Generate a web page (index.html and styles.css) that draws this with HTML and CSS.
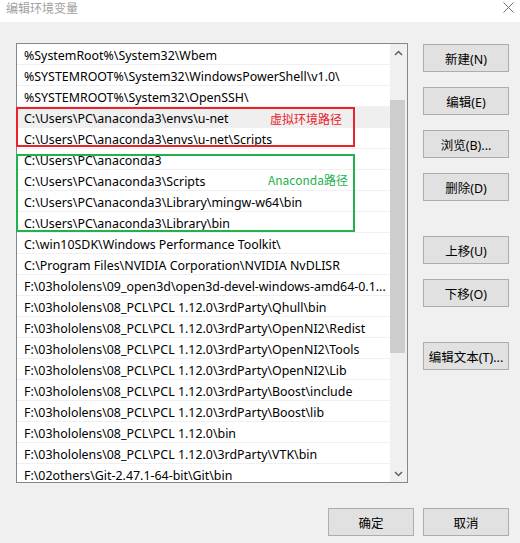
FILE: index.html
```html
<!DOCTYPE html>
<html>
	<head>
		<meta charset="UTF-8">
		<title>编辑环境变量</title>
		<link rel="stylesheet" href="styles.css">
	</head>
	<body>
		<div class="titlebar">
			<span class="title">编辑环境变量</span>
			<svg class="close" width="11" height="11" viewBox="0 0 11 11">
				<path d="M0.5 0.5L10.5 10.5M10.5 0.5L0.5 10.5" stroke="#707070" stroke-width="1" fill="none"/>
			</svg>
		</div>
		<div class="content">
			<div class="main">
				<div class="listwrap">
					<div class="list">
						<ul class="rows">
							<li>%SystemRoot%\System32\Wbem</li>
							<li>%SYSTEMROOT%\System32\WindowsPowerShell\v1.0\</li>
							<li>%SYSTEMROOT%\System32\OpenSSH\</li>
							<li class="hover">C:\Users\PC\anaconda3\envs\u-net</li>
							<li>C:\Users\PC\anaconda3\envs\u-net\Scripts</li>
							<li>C:\Users\PC\anaconda3</li>
							<li>C:\Users\PC\anaconda3\Scripts</li>
							<li>C:\Users\PC\anaconda3\Library\mingw-w64\bin</li>
							<li>C:\Users\PC\anaconda3\Library\bin</li>
							<li>C:\win10SDK\Windows Performance Toolkit\</li>
							<li>C:\Program Files\NVIDIA Corporation\NVIDIA NvDLISR</li>
							<li>F:\03hololens\09_open3d\open3d-devel-windows-amd64-0.1...</li>
							<li>F:\03hololens\08_PCL\PCL 1.12.0\3rdParty\Qhull\bin</li>
							<li>F:\03hololens\08_PCL\PCL 1.12.0\3rdParty\OpenNI2\Redist</li>
							<li>F:\03hololens\08_PCL\PCL 1.12.0\3rdParty\OpenNI2\Tools</li>
							<li>F:\03hololens\08_PCL\PCL 1.12.0\3rdParty\OpenNI2\Lib</li>
							<li>F:\03hololens\08_PCL\PCL 1.12.0\3rdParty\Boost\include</li>
							<li>F:\03hololens\08_PCL\PCL 1.12.0\3rdParty\Boost\lib</li>
							<li>F:\03hololens\08_PCL\PCL 1.12.0\bin</li>
							<li>F:\03hololens\08_PCL\PCL 1.12.0\3rdParty\VTK\bin</li>
							<li>F:\02others\Git-2.47.1-64-bit\Git\bin</li>
						</ul>
						<div class="scrollbar">
							<div class="arrow">
								<svg width="9" height="6" viewBox="0 0 9 6"><path d="M1 5L4.5 1.5L8 5" stroke="#606060" stroke-width="1.5" fill="none"/></svg>
							</div>
							<div class="track">
								<div class="thumb"></div>
							</div>
							<div class="arrow">
								<svg width="9" height="6" viewBox="0 0 9 6"><path d="M1 1L4.5 4.5L8 1" stroke="#606060" stroke-width="1.5" fill="none"/></svg>
							</div>
						</div>
					</div>
					<div class="mark mark-red"><span>虚拟环境路径</span></div>
					<div class="mark mark-green"><span>Anaconda路径</span></div>
				</div>
				<div class="side">
					<button class="btn">新建(N)</button>
					<button class="btn">编辑(E)</button>
					<button class="btn">浏览(B)...</button>
					<button class="btn">删除(D)</button>
					<button class="btn far">上移(U)</button>
					<button class="btn">下移(O)</button>
					<button class="btn far">编辑文本(T)...</button>
				</div>
			</div>
			<div class="footer">
				<button class="btn">确定</button>
				<button class="btn">取消</button>
			</div>
		</div>
	</body>
</html>
```
FILE: styles.css
```css
body, ul {
	margin: 0;
	padding: 0;
}
body {
	width: 520px;
	height: 543px;
	background: #f0f0f0;
	font: 12px "Noto Sans", "Noto Sans CJK SC", sans-serif;
	color: #000;
	overflow: hidden;
}
ul {
	list-style: none;
}
.titlebar {
	height: 22px;
	background: #fff;
	display: flex;
	align-items: flex-start;
	justify-content: space-between;
	padding: 0 6px;
}
.title {
	color: #a0a0a0;
	font-family: "Noto Sans CJK SC", sans-serif;
	font-size: 12px;
	line-height: 16px;
}
.close {
	margin-top: 2px;
}
.content {
	padding: 21px 11px 0 16px;
}
.main {
	display: flex;
	gap: 15px;
}
.listwrap {
	position: relative;
	width: 392px;
	height: 440px;
}
.list {
	box-sizing: border-box;
	width: 392px;
	height: 440px;
	border: 1px solid #828790;
	background: #fff;
	display: flex;
	overflow: hidden;
}
.rows {
	flex: 1;
	font-size: 12.4px;
}
.rows li {
	box-sizing: border-box;
	height: 21px;
	line-height: 20px;
	padding: 2px 0 0 7px;
	border-bottom: 1px solid #f0f0f0;
	white-space: nowrap;
}
.rows li.hover {
	background: #efefef;
}
.scrollbar {
	width: 17px;
	background: #f0f0f0;
	display: flex;
	flex-direction: column;
}
.arrow {
	height: 17px;
	display: flex;
	align-items: center;
	justify-content: center;
}
.track {
	flex: 1;
	padding-top: 39px;
}
.thumb {
	width: 15px;
	height: 253px;
	background: #cdcdcd;
}
.mark {
	position: absolute;
	left: 0;
	width: 339px;
	box-sizing: border-box;
	border: 2px solid;
}
.mark span {
	position: absolute;
	font-family: "Noto Sans CJK SC", sans-serif;
	font-size: 12px;
	line-height: 16px;
}
.mark-red {
	top: 64px;
	height: 40px;
	border-color: #e8232b;
}
.mark-red span {
	left: 252px;
	top: 2px;
	color: #e8232b;
}
.mark-green {
	top: 111px;
	height: 78px;
	border-color: #22b14c;
}
.mark-green span {
	left: 250px;
	top: 16px;
	color: #22b14c;
}
.side {
	display: flex;
	flex-direction: column;
	gap: 15px;
	padding-top: 1px;
}
.side .far {
	margin-top: 20px;
}
.btn {
	box-sizing: border-box;
	width: 86px;
	height: 28px;
	background: #e1e1e1;
	border: 1px solid #adadad;
	font: 12.5px "Noto Sans", "Noto Sans CJK SC", sans-serif;
	color: #000;
	padding: 0;
}
.footer {
	display: flex;
	justify-content: flex-end;
	gap: 9px;
	padding-top: 25px;
}
```
